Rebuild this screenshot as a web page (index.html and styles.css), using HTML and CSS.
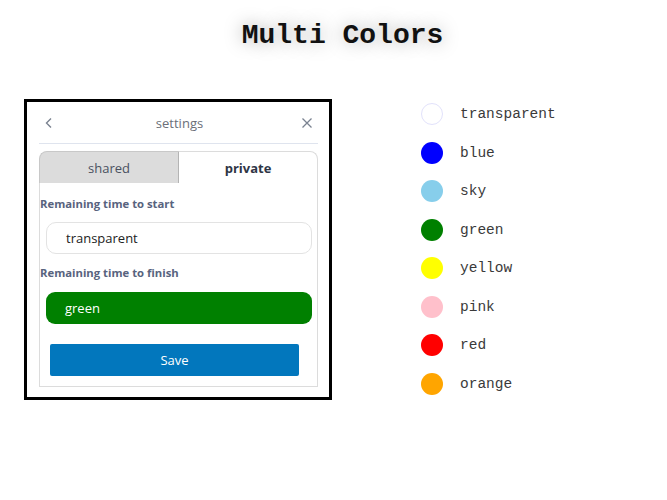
FILE: index.html
```html
<!DOCTYPE html>
<html>
<head>
<meta charset="utf-8">
<link rel="stylesheet" href="styles.css">
</head>
<body>
<h1 class="title">Multi Colors</h1>
<div class="main">
  <div class="frame">
    <div class="card">
      <div class="header">
        <svg class="icon" width="10" height="12" viewBox="0 0 10 12"><path d="M7 1.5 L2.5 6 L7 10.5" fill="none" stroke="#7a8290" stroke-width="1.4"/></svg>
        <span class="header-title">settings</span>
        <svg class="icon" width="12" height="12" viewBox="0 0 12 12"><path d="M1.5 1.5 L10.5 10.5 M10.5 1.5 L1.5 10.5" fill="none" stroke="#7a8290" stroke-width="1.3"/></svg>
      </div>
      <div class="tabs">
        <div class="tab tab-shared">shared</div>
        <div class="tab tab-private">private</div>
      </div>
      <div class="content">
        <div class="label">Remaining time to start</div>
        <div class="field field-transparent">transparent</div>
        <div class="label label-2">Remaining time to finish</div>
        <div class="field field-green">green</div>
        <button class="save">Save</button>
      </div>
    </div>
  </div>
  <ul class="legend">
    <li class="item"><span class="dot dot-transparent"></span><span class="name">transparent</span></li>
    <li class="item"><span class="dot dot-blue"></span><span class="name">blue</span></li>
    <li class="item"><span class="dot dot-sky"></span><span class="name">sky</span></li>
    <li class="item"><span class="dot dot-green"></span><span class="name">green</span></li>
    <li class="item"><span class="dot dot-yellow"></span><span class="name">yellow</span></li>
    <li class="item"><span class="dot dot-pink"></span><span class="name">pink</span></li>
    <li class="item"><span class="dot dot-red"></span><span class="name">red</span></li>
    <li class="item"><span class="dot dot-orange"></span><span class="name">orange</span></li>
  </ul>
</div>
</body>
</html>
```
FILE: styles.css
```css
* { box-sizing: border-box; }
html, body { margin: 0; padding: 0; background: #fff; }
body { width: 667px; height: 500px; overflow: hidden; }

.title {
  margin: 0;
  padding: 19px 0 0 18px;
  height: 99px;
  text-align: center;
  font-family: "Liberation Mono", "DejaVu Sans Mono", monospace;
  font-weight: bold;
  font-size: 28px;
  line-height: 34px;
  color: #111;
  text-shadow: 0 0 18px rgba(0,0,0,0.35);
}

.main {
  display: flex;
  align-items: flex-start;
  padding-left: 24px;
}

.frame {
  width: 308px;
  height: 301px;
  border: 3px solid #000;
  padding: 0 11px 0 12px;
}

.card {
  font-family: "Open Sans", "Noto Sans", sans-serif;
}

.header {
  height: 42px;
  border-bottom: 1px solid #dfe4ee;
  display: flex;
  align-items: center;
  justify-content: space-between;
  padding: 1px 5px 0 5px;
}
.header-title {
  font-size: 13px;
  color: #6b6f78;
  margin-left: 4px;
  padding-bottom: 1px;
}
.icon { display: block; }

.tabs {
  margin-top: 7px;
  display: flex;
  height: 32px;
}
.tab {
  flex: 1;
  display: flex;
  align-items: center;
  justify-content: center;
  font-size: 13px;
}
.tab-shared {
  background: #dcdcdc;
  border: 1px solid #c8c8c8;
  border-right-color: #b4b4b4;
  border-bottom: none;
  border-radius: 8px 0 0 0;
  color: #4a5160;
}
.tab-private {
  background: #fff;
  border: 1px solid #dcdcdc;
  border-left: none;
  border-bottom: none;
  border-radius: 0 8px 0 0;
  font-weight: bold;
  color: #2f3646;
}

.content {
  border: 1px solid #dcdcdc;
  border-top: none;
  padding: 14px 5px 10px 0;
  display: flex;
  flex-direction: column;
}
.label {
  font-size: 11.3px;
  line-height: 14px;
  font-weight: bold;
  color: #58637e;
}
.label-2 { margin-top: 12px; }

.field {
  margin: 11px 0 0 6px;
  height: 32px;
  border-radius: 10px;
  padding-left: 19px;
  display: flex;
  align-items: center;
  font-size: 13px;
}
.field-transparent {
  border: 1px solid #e3e3e3;
  color: #222;
}
.field-green {
  margin-top: 12px;
  background: #008000;
  color: #fff;
  border-radius: 9px;
}

.save {
  margin: 20px 0 0 10px;
  width: 249px;
  height: 32px;
  border: none;
  border-radius: 2px;
  background: #0277bd;
  color: #fff;
  font-family: "Open Sans", "Noto Sans", sans-serif;
  font-size: 13px;
}

.legend {
  list-style: none;
  margin: 4px 0 0 89px;
  padding: 0;
  display: flex;
  flex-direction: column;
  gap: 16.5px;
}
.item {
  display: flex;
  align-items: center;
  height: 22px;
}
.dot {
  width: 22px;
  height: 22px;
  border-radius: 50%;
  margin-right: 17px;
}
.name {
  font-family: "Liberation Mono", "DejaVu Sans Mono", monospace;
  font-size: 14.5px;
  color: #3a3a3a;
}
.dot-transparent { border: 1px solid #e2e2fb; }
.dot-blue { background: #0000ff; }
.dot-sky { background: #87ceeb; }
.dot-green { background: #008000; }
.dot-yellow { background: #ffff00; }
.dot-pink { background: #ffc0cb; }
.dot-red { background: #ff0000; }
.dot-orange { background: #ffa500; }
```
